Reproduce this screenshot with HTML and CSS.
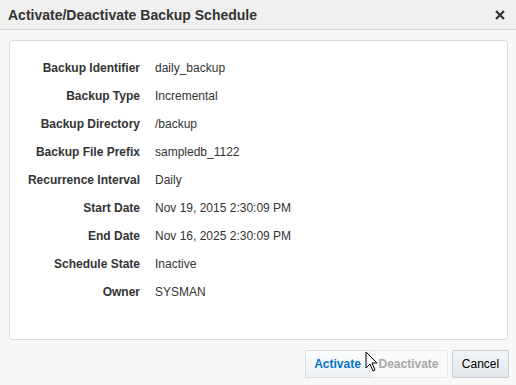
FILE: index.html
```html
<!DOCTYPE html>
<html lang="en">
<head>
    <meta charset="UTF-8">
    <title>Activate/Deactivate Backup Schedule</title>
    <link rel="stylesheet" href="styles.css">
</head>
<body>

    <div class="dialog">
        <div class="dialog-header">
            <h2>Activate/Deactivate Backup Schedule</h2>
            <svg class="close" width="10" height="10" viewBox="0 0 10 10">
                <path d="M1 1 L9 9 M9 1 L1 9" stroke="#333" stroke-width="2.2"/>
            </svg>
        </div>
        <div class="dialog-body">
            <div class="panel">
                <table class="details">
                    <tr><th>Backup Identifier</th><td>daily_backup</td></tr>
                    <tr><th>Backup Type</th><td>Incremental</td></tr>
                    <tr><th>Backup Directory</th><td>/backup</td></tr>
                    <tr><th>Backup File Prefix</th><td>sampledb_1122</td></tr>
                    <tr><th>Recurrence Interval</th><td>Daily</td></tr>
                    <tr><th>Start Date</th><td>Nov 19, 2015 2:30:09 PM</td></tr>
                    <tr><th>End Date</th><td>Nov 16, 2025 2:30:09 PM</td></tr>
                    <tr><th>Schedule State</th><td>Inactive</td></tr>
                    <tr><th>Owner</th><td>SYSMAN</td></tr>
                </table>
            </div>
            <div class="actions">
                <button class="btn btn-primary">Activate</button>
                <button class="btn btn-disabled" disabled>Deactivate</button>
                <button class="btn btn-cancel">Cancel</button>
            </div>
        </div>
        <!-- mouse pointer -->
        <svg class="cursor" width="14" height="22" viewBox="0 0 14 22">
            <path d="M1 1 L1 17 L5 13 L8 20 L10 19 L7 12 L12 12 Z" fill="#fff" stroke="#000" stroke-width="1"/>
        </svg>
    </div>

</body>
</html>
```

FILE: styles.css
```css
body {
    margin: 0;
    font-family: "Liberation Sans", Arial, sans-serif;
    background-color: #f8f8f8;
    color: #333;
}
.dialog {
    position: relative;
    width: 516px;
    height: 385px;
    overflow: hidden;
}
.dialog-header {
    display: flex;
    align-items: center;
    justify-content: space-between;
    height: 30px;
    padding: 0 11px 0 8px;
    background-color: #f0f0f0;
    border-bottom: 1px solid #d2d9e0;
    box-sizing: border-box;
}
.dialog-header h2 {
    margin: 0;
    font-size: 14px;
    font-weight: bold;
    color: #333;
}
.dialog-body {
    padding: 10px 8px 0 9px;
}
.panel {
    background: white;
    border: 1px solid #d6dfe6;
    border-radius: 3px;
    box-sizing: border-box;
    height: 300px;
    padding-top: 13px;
}
.details {
    border-collapse: collapse;
    font-size: 12px;
}
.details th {
    width: 130px;
    padding: 0 15px 0 0;
    height: 28px;
    text-align: right;
    font-weight: bold;
    color: #333;
    white-space: nowrap;
}
.details td {
    padding: 0;
    height: 28px;
    color: #333;
    white-space: nowrap;
}
.actions {
    display: flex;
    justify-content: flex-end;
    margin-top: 10px;
    margin-right: -1px;
}
.btn {
    font-family: "Liberation Sans", Arial, sans-serif;
    font-size: 12px;
    height: 28px;
    padding: 0 8px;
    border: 1px solid #d6dfe6;
    border-radius: 2px;
    background: linear-gradient(#fbfcfd, #eef1f4);
    cursor: pointer;
}
.btn-primary {
    width: 64px;
    color: #0572ce;
    font-weight: bold;
    border-right: none;
    border-radius: 2px 0 0 2px;
}
.btn-disabled {
    width: 79px;
    color: #a8a8a8;
    font-weight: bold;
    background: #f9fafb;
    border-color: #e3e8ec;
    border-radius: 0 2px 2px 0;
}
.btn-cancel {
    width: 57px;
    margin-left: 4px;
    color: #000;
    background: linear-gradient(#f3f5f7, #e3e7eb);
    border-color: #c4ced7;
}
.cursor {
    position: absolute;
    left: 365px;
    top: 351px;
}
```
